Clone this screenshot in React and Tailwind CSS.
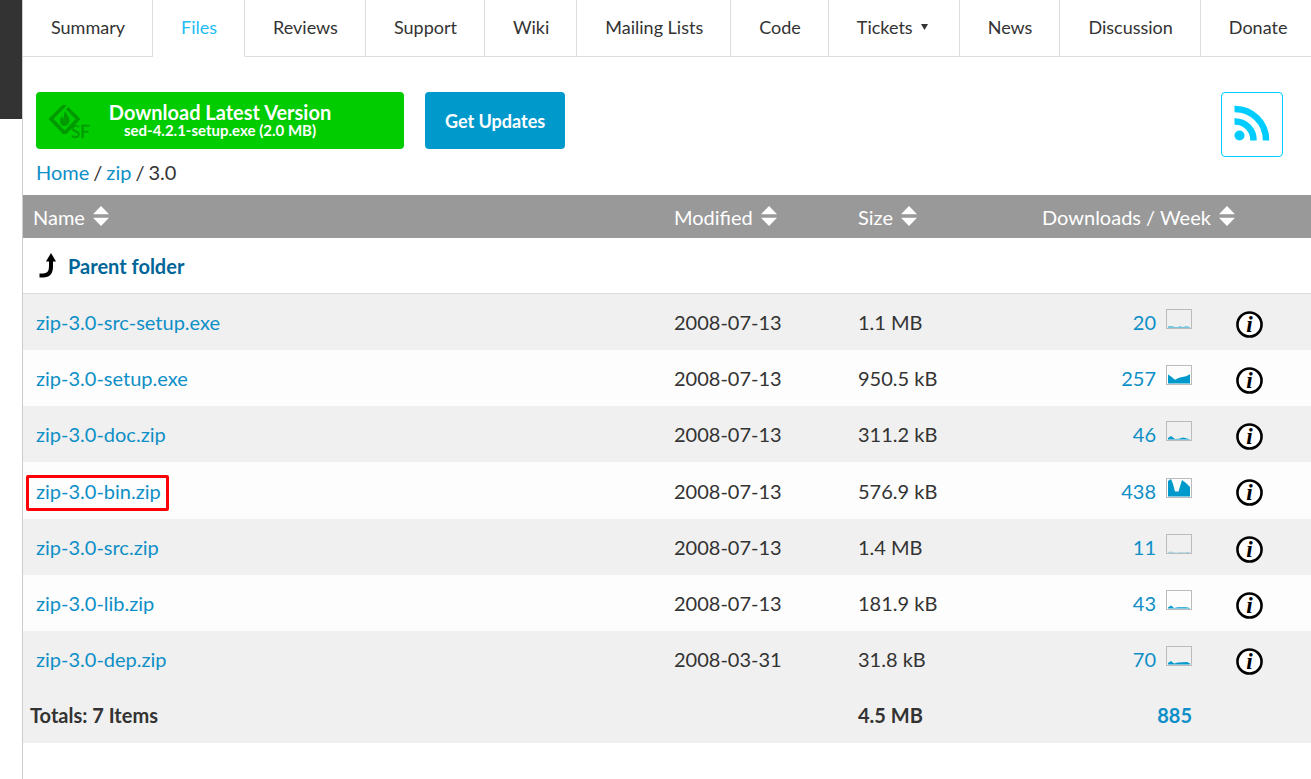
import clsx from 'clsx'

const TABS = ['Summary', 'Files', 'Reviews', 'Support', 'Wiki', 'Mailing Lists', 'Code', 'Tickets', 'News', 'Discussion', 'Donate']

// trend: points of the weekly download graph, in the graph's own 26x20 box
const FILES = [
  { name: 'zip-3.0-src-setup.exe', modified: '2008-07-13', size: '1.1 MB', downloads: 20, trend: '2,17.5 6,17.4 9,18 12,18 14,17.5 17,18 20,17.5 24,18' },
  { name: 'zip-3.0-setup.exe', modified: '2008-07-13', size: '950.5 kB', downloads: 257, trend: '2,9.5 5,11.5 9,14.7 13,12.7 20,11.3 24,9.3' },
  { name: 'zip-3.0-doc.zip', modified: '2008-07-13', size: '311.2 kB', downloads: 46, trend: '2,17 5,15 9,18 13,17.7 17,16.5 21,17.4 24,18.2' },
  { name: 'zip-3.0-bin.zip', modified: '2008-07-13', size: '576.9 kB', downloads: 438, trend: '2,3 5,1 7,6 9,13.5 12.5,13.5 16,2 20,5 24,9', marked: true },
  { name: 'zip-3.0-src.zip', modified: '2008-07-13', size: '1.4 MB', downloads: 11, trend: '2,18 5,17.8 9,18.3 12,18.3 15,18 18,18.3 21,18 24,18.1', faint: true },
  { name: 'zip-3.0-lib.zip', modified: '2008-07-13', size: '181.9 kB', downloads: 43, trend: '2,17.5 5,15.6 8,18 12,17.3 20,17.3 24,18' },
  { name: 'zip-3.0-dep.zip', modified: '2008-03-31', size: '31.8 kB', downloads: 70, trend: '2,17 5,15 8,17.5 12,16.4 21,16 24,17.5' },
]

const SortIcon = () => (
  <svg className="shrink-0" width="16" height="20" viewBox="0 0 16 20" fill="#fff" aria-hidden="true">
    <path d="M8 0 16 8.300H0z" />
    <path d="M8 20 16 11.700H0z" />
  </svg>
)

const SfLogo = () => (
  <svg width="42" height="40" viewBox="0 0 42 40" fill="#000" opacity="0.24" aria-hidden="true">
    <path d="M14.5 2H19L5.500 16 18 28.500 15 31 .5 16z" />
    <path d="M20.500 4 32.500 16 18.500 31H13.500L27.500 16 18 6.500z" />
    <path d="M17.500 8C18 11.500 21.500 13 21.500 17.500 21.500 21 19 23 16.500 23S12 21 12 17.500C12 15.500 13 14 14 13 14 15 15 16 15.500 16 16 13 15.500 11 17.500 8z" />
    <text x="23" y="35" fontFamily="Lato, sans-serif" fontSize="17" fontWeight="400" stroke="#000" strokeWidth=".4">SF</text>
  </svg>
)

const RssIcon = () => (
  <svg width="36" height="36" viewBox="0 0 36 36" fill="none" stroke="#00ccff" strokeWidth="6.500" aria-hidden="true">
    <circle cx="5.500" cy="30.500" r="5" fill="#00ccff" stroke="none" />
    <path d="M.5 16.500A18.500 18.500 0 0 1 19.500 35.500" />
    <path d="M.5 4A31 31 0 0 1 32 35.500" />
  </svg>
)

const UpIcon = () => (
  <svg width="18" height="26" viewBox="0 0 18 26" aria-hidden="true">
    <path d="M12 0 17 8.500H7z" />
    <path d="M12 7V13.500Q12 22.500 4 22.500H.500" fill="none" stroke="#000" strokeWidth="4" />
  </svg>
)

const InfoIcon = () => (
  <svg width="27" height="27" viewBox="0 0 28 28" aria-hidden="true">
    <circle cx="14" cy="14" r="12.500" fill="#fff" stroke="#000" strokeWidth="2.700" />
    <text x="14" y="21.500" textAnchor="middle" fontFamily="Liberation Serif, serif" fontSize="24" fontWeight="700" fontStyle="italic">i</text>
  </svg>
)

const Trend = ({ points, faint }) => (
  <svg className="mb-1.5" width="26" height="20" viewBox="0 0 26 20" aria-hidden="true">
    <rect x=".5" y=".5" width="25" height="19" fill="none" stroke="#bbb" />
    <polygon points={`2,18.500 ${points} 24,18.500`} fill="#0099cc" opacity={faint ? 0.6 : 1} />
  </svg>
)

const Th = ({ text, colSpan }) => (
  <th className="px-2.5 text-left font-normal" colSpan={colSpan}>
    <button className="flex items-center gap-2 whitespace-nowrap">
      <span>{text}</span>
      <span className="pb-0.5"><SortIcon /></span>
    </button>
  </th>
)

const Row = ({ file, striped }) => (
  <tr className={clsx(striped ? 'bg-[#f0f0f0]' : 'bg-[#fdfdfd]', file.marked ? 'h-[57px]' : 'h-14')}>
    <td className="pl-[13px]">
      <span className="relative inline-block">
        <a href="#" className="text-[#0e8fc7]">{file.name}</a>
        {file.marked && <span className="pointer-events-none absolute -top-0.5 -right-2 -bottom-1.5 -left-2.5 rounded-xs border-3 border-[#fb0007]" />}
      </span>
    </td>
    <td className="px-2.5">{file.modified}</td>
    <td className="px-2.5">{file.size}</td>
    <td className="px-2.5">
      <a href="#" className="flex items-center justify-end gap-2.5 text-[#0e8fc7]">
        {file.downloads}
        <Trend points={file.trend} faint={file.faint} />
      </a>
    </td>
    <td className="pt-1 pl-[34px]">
      <button className="block" aria-label={`Details of ${file.name}`}><InfoIcon /></button>
    </td>
  </tr>
)

export default function App() {
  return (
    <div className="flex min-h-screen overflow-x-clip bg-white font-[Lato,sans-serif] text-xl leading-7 text-[#333]">
      <div className="w-[22px] shrink-0">
        <div className="h-[119px] bg-[#333]" />
      </div>
      <main className="min-w-0 flex-1 border-l border-[#ccc]">
        <nav className="flex text-lg">
          {TABS.map(tab => (
            <a
              key={tab}
              href="#"
              className={clsx(
                'flex h-[57px] shrink-0 items-center gap-2 border-r border-b border-r-[#ddd] pr-[27px] pb-0.5 pl-7 whitespace-nowrap',
                tab === 'Files' ? 'border-b-transparent text-[#1cbcf5]' : 'border-b-[#ddd]',
              )}
            >
              {tab}
              {tab === 'Tickets' && (
                <svg className="mr-1" width="7" height="6" viewBox="0 0 7 6" fill="#333" aria-hidden="true"><path d="M0 0h7L3.500 6z" /></svg>
              )}
            </a>
          ))}
        </nav>

        <div className="flex items-start justify-between pt-[35px] pr-7 pb-[7px] pl-[13px]">
          <div>
            <div className="flex gap-[21px] font-bold text-white">
              <a href="#" className="grid h-[57px] w-[368px] grid-cols-[54px_1fr_54px] items-center rounded bg-[#00cc00] text-center">
                <span className="flex justify-end pt-1"><SfLogo /></span>
                <span className="pb-0.5">
                  <span className="block leading-5">Download Latest Version</span>
                  <span className="block text-[15px] leading-4">sed-4.2.1-setup.exe (2.0 MB)</span>
                </span>
              </a>
              <button className="rounded bg-[#0099cc] px-5 text-lg">Get Updates</button>
            </div>
            <div className="mt-[7px] flex gap-1 leading-8">
              <a href="#" className="text-[#0e8fc7]">Home</a>
              <span>/</span>
              <a href="#" className="text-[#0e8fc7]">zip</a>
              <span>/</span>
              <span>3.0</span>
            </div>
          </div>
          <a href="#" aria-label="RSS" className="flex h-[65px] w-[62px] items-center justify-center rounded border border-[#00ccff] pb-1">
            <RssIcon />
          </a>
        </div>

        <table className="w-full table-fixed border-separate border-spacing-0">
          <colgroup>
            <col />
            <col className="w-[184px]" />
            <col className="w-[184px]" />
            <col className="w-[170px]" />
            <col className="w-[109px]" />
          </colgroup>
          <thead>
            <tr className="h-[43px] bg-[#999] text-white">
              <Th text="Name" />
              <Th text="Modified" />
              <Th text="Size" />
              <Th text="Downloads / Week" colSpan={2} />
            </tr>
          </thead>
          <tbody>
            <tr className="h-14">
              <td className="border-b border-[#ddd] px-4" colSpan={5}>
                <a href="#" className="flex items-center gap-[11px] font-bold text-[#006699]">
                  <UpIcon />
                  Parent folder
                </a>
              </td>
            </tr>
            {FILES.map((file, i) => <Row key={file.name} file={file} striped={i % 2 === 0} />)}
          </tbody>
          <tfoot>
            <tr className="h-14 bg-[#f0f0f0] font-bold">
              <td className="pl-[7px]">Totals: 7 Items</td>
              <td />
              <td className="px-2.5">4.5 MB</td>
              <td className="px-2.5 text-right text-[#0e8fc7]">885</td>
              <td />
            </tr>
          </tfoot>
        </table>
      </main>
    </div>
  )
}
